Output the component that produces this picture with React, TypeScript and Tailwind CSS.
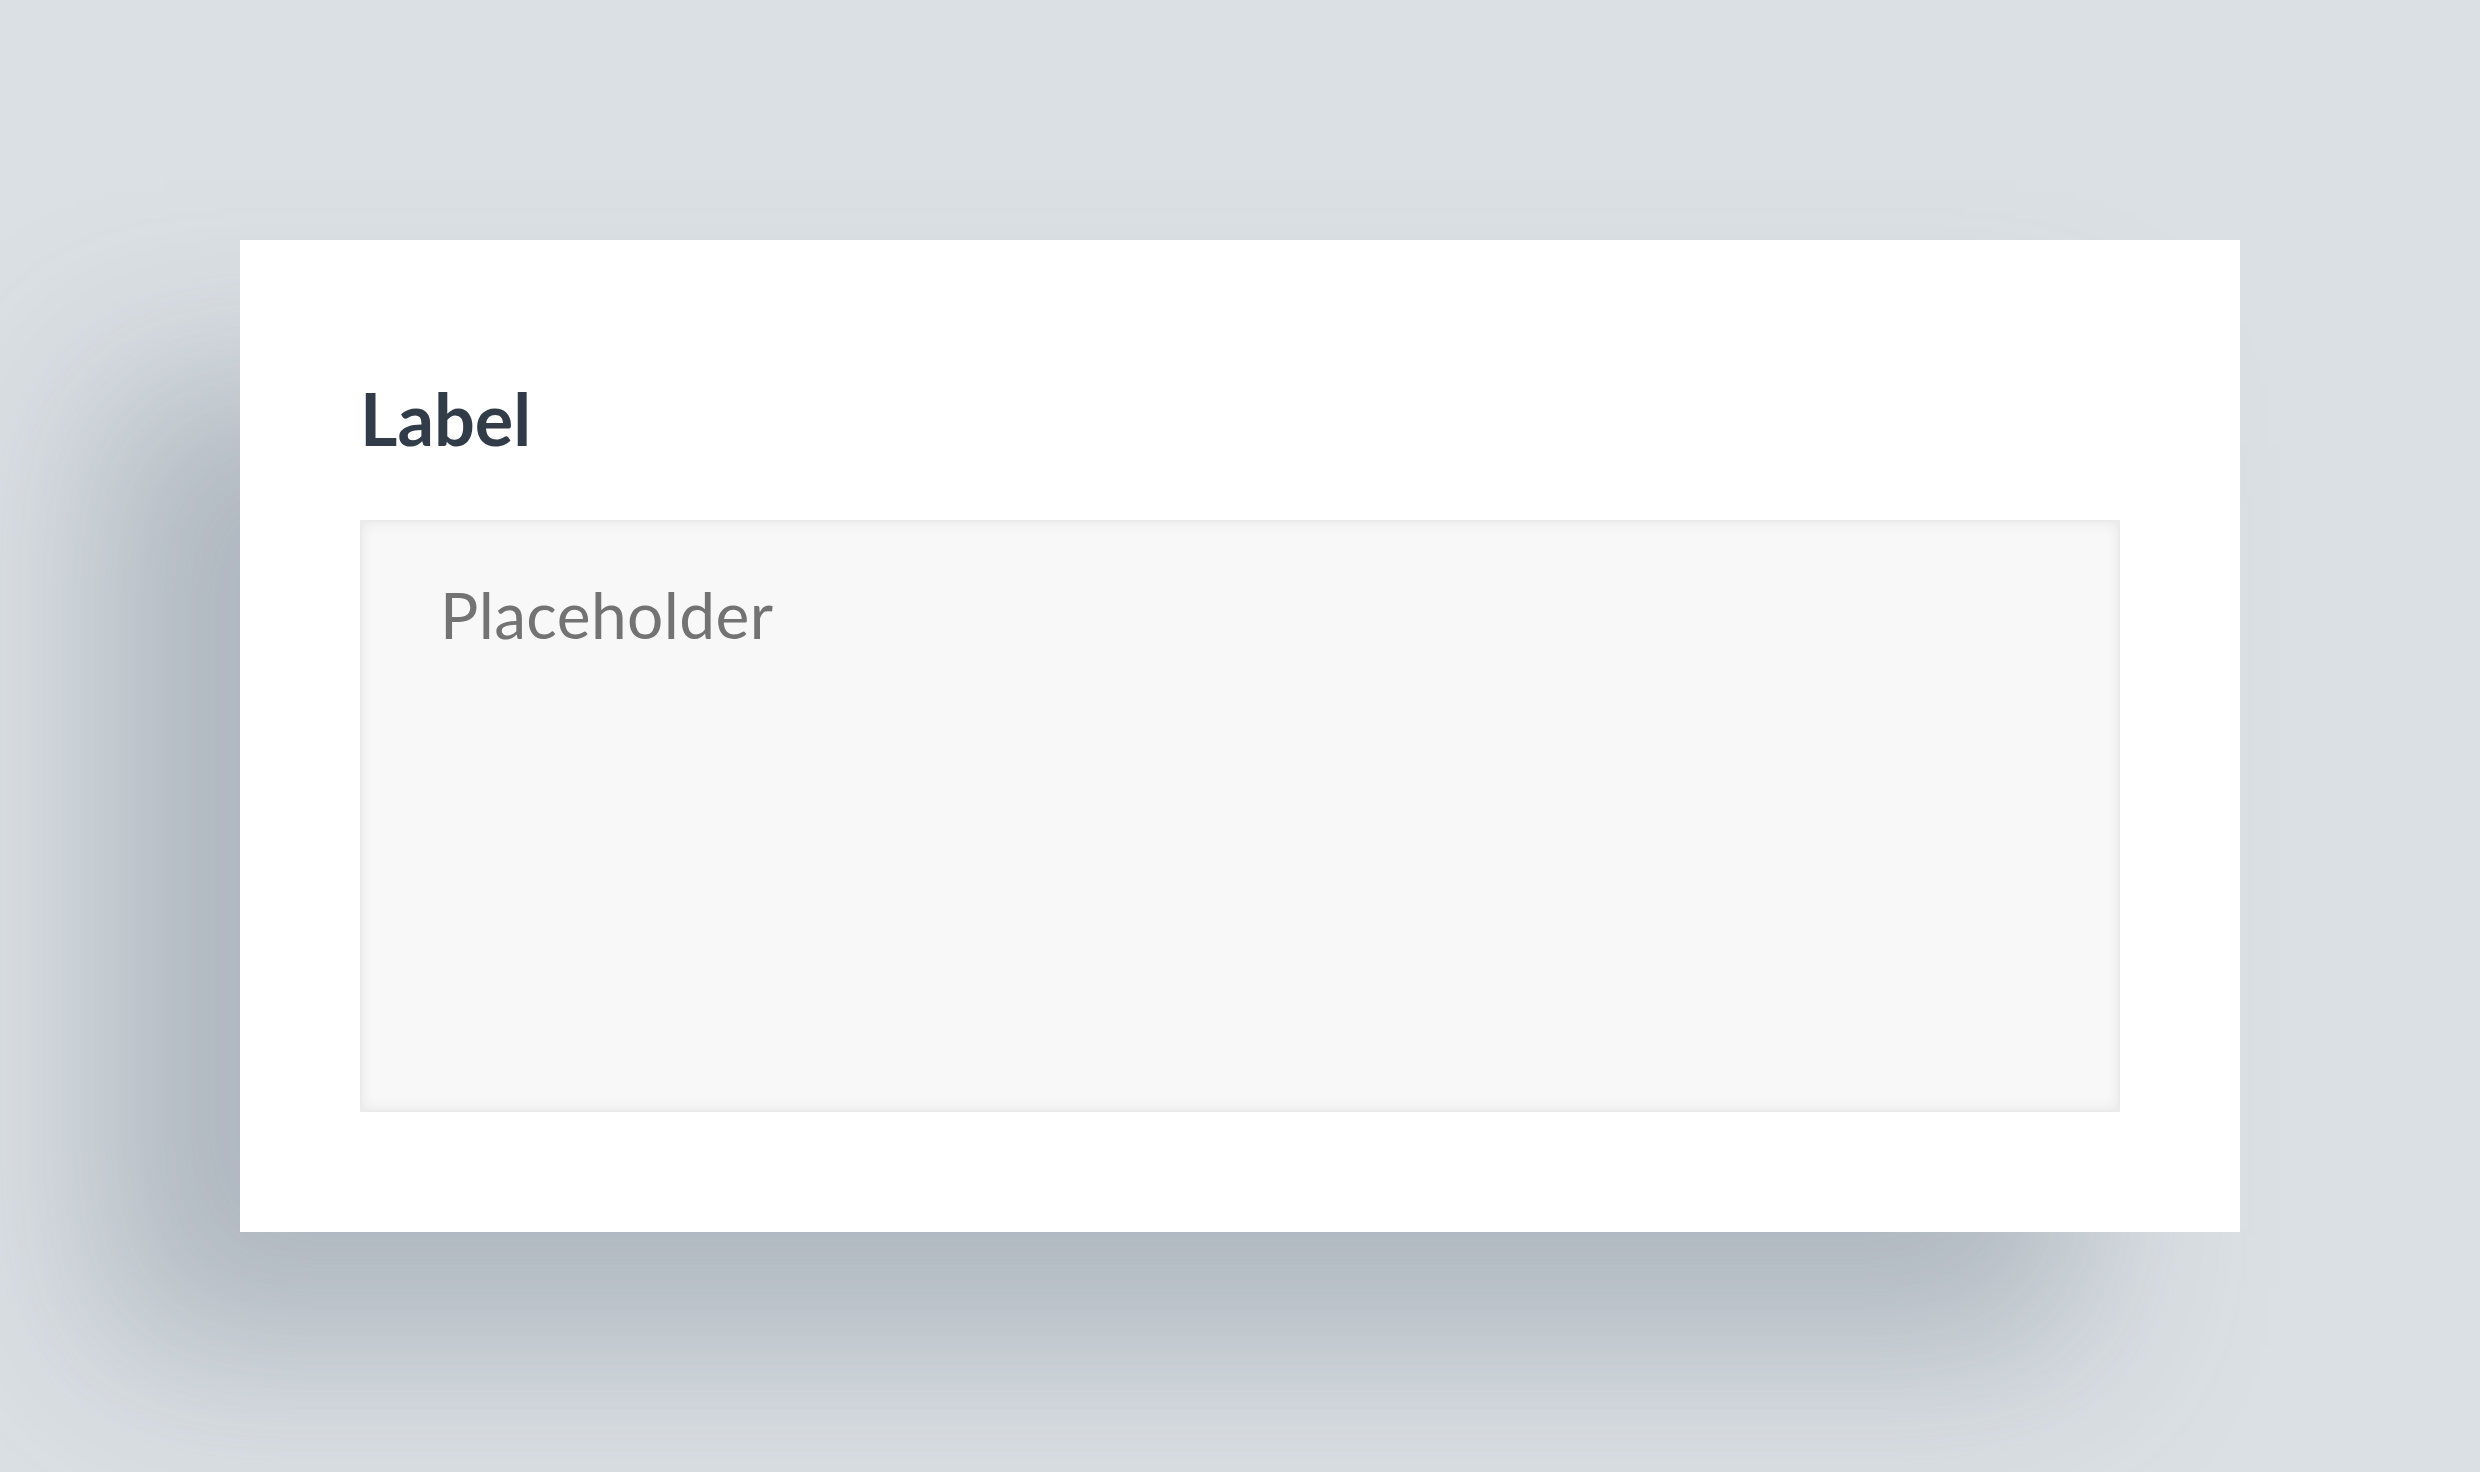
export default function App() {
  return (
    <div className="w-full h-[1472px] bg-[#dbe0e4] pt-[240px] pl-[240px] overflow-hidden">
      <div className="w-[2000px] h-[992px] bg-white p-[120px] flex flex-col shadow-[-150px_130px_170px_-15px_rgba(95,108,126,0.36)]">
        <label
          htmlFor="field"
          className="block text-[72px] leading-[116px] font-bold text-[#313c48] mb-[44px]"
          style={{ fontFamily: "Lato, 'Open Sans', sans-serif" }}
        >
          Label
        </label>
        <textarea
          id="field"
          placeholder="Placeholder"
          className="w-full h-[592px] resize-none outline-none bg-[#f8f8f8] border-2 border-[#ebebeb] shadow-[inset_0_0_14px_rgba(0,0,0,0.07)] pt-[45px] pl-[78px] pr-[78px] text-[64px] tracking-[0.4px] leading-[96px] text-[#444] placeholder:text-[#737373]"
          style={{ fontFamily: "Lato, 'Open Sans', sans-serif" }}
        />
      </div>
    </div>
  );
}
